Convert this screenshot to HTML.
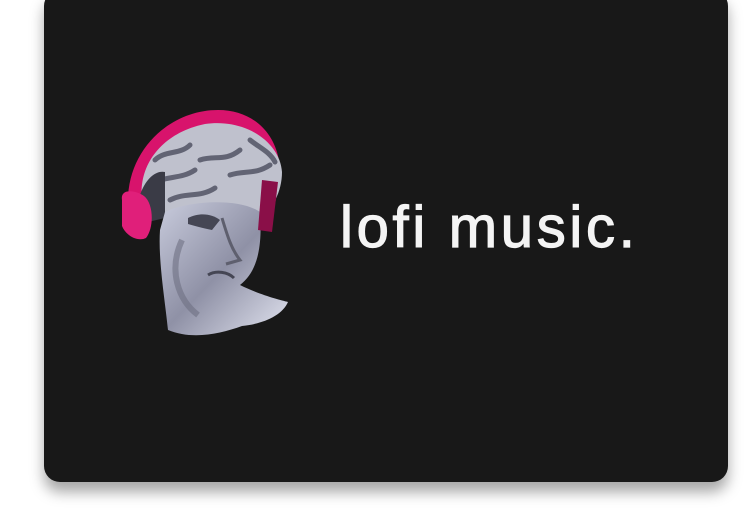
<!DOCTYPE html>
<html><head><meta charset="utf-8"><style>
html,body{margin:0;padding:0;background:#fff;width:744px;height:516px;overflow:hidden;}
.card{position:absolute;left:44px;top:-10px;width:684px;height:492px;background:#181818;border-radius:16px;box-shadow:0 10px 14px rgba(0,0,0,0.35);}
.t{position:absolute;left:340px;top:193px;font-family:"Liberation Sans",sans-serif;font-size:58px;color:#f4f4f4;letter-spacing:3.7px;line-height:70px;white-space:nowrap;-webkit-text-stroke:1.2px #f4f4f4;}
svg{position:absolute;left:110px;top:100px;}
</style></head><body>
<div class="card"></div>
<svg width="190" height="250" viewBox="0 0 190 250">
<defs>
<linearGradient id="f" x1="0" y1="0" x2="1" y2="1">
<stop offset="0" stop-color="#c8cbdc"/><stop offset="0.5" stop-color="#8f91a6"/><stop offset="1" stop-color="#e2e4f0"/>
</linearGradient>
</defs>
<path d="M18 105 C16 50 60 10 108 10 C148 10 172 40 170 78 L160 130 L152 130 L158 75 C160 45 138 24 108 24 C72 24 38 50 32 105 Z" fill="#d8136c"/>
<path d="M32 100 C28 62 55 32 95 24 C135 18 170 42 172 72 C172 92 162 110 150 118 L128 112 L100 110 L62 118 L40 118 Z" fill="#bfc1cd"/>
<path d="M45 60 C55 50 70 55 80 45 M40 85 C55 75 70 80 85 70 M90 60 C105 55 115 62 130 50 M120 75 C135 70 145 75 160 65 M60 100 C75 92 90 98 105 88 M140 40 C150 48 160 52 165 62" stroke="#626474" stroke-width="5" fill="none" stroke-linecap="round"/>
<path d="M30 95 C35 80 45 70 55 72 L55 118 L38 122 Z" fill="#3a3b46"/>
<path d="M55 112 C80 100 130 98 150 112 C152 140 150 170 130 185 C150 195 170 200 178 202 C172 216 152 224 132 226 C110 234 82 240 58 230 C55 200 48 160 50 130 Z" fill="url(#f)"/>
<path d="M78 118 C90 112 102 114 110 120 L102 130 C92 128 85 126 78 124 Z" fill="#454654"/>
<path d="M112 118 C118 138 122 150 130 160 L116 164" stroke="#5e5f6e" stroke-width="3" fill="none"/>
<path d="M98 175 C106 170 118 172 124 178" stroke="#454654" stroke-width="3" fill="none"/>
<path d="M72 140 C58 170 68 200 88 215" stroke="#6e7082" stroke-width="6" fill="none" opacity="0.6"/>
<path d="M12 100 C10 88 26 90 34 96 C44 104 44 128 36 138 C28 142 16 136 12 126 Z" fill="#e01f7a"/>
<path d="M152 80 L168 82 L162 132 L148 130 Z" fill="#8a0f48"/>
</svg>
<div class="t">lofi music.</div>
</body></html>
